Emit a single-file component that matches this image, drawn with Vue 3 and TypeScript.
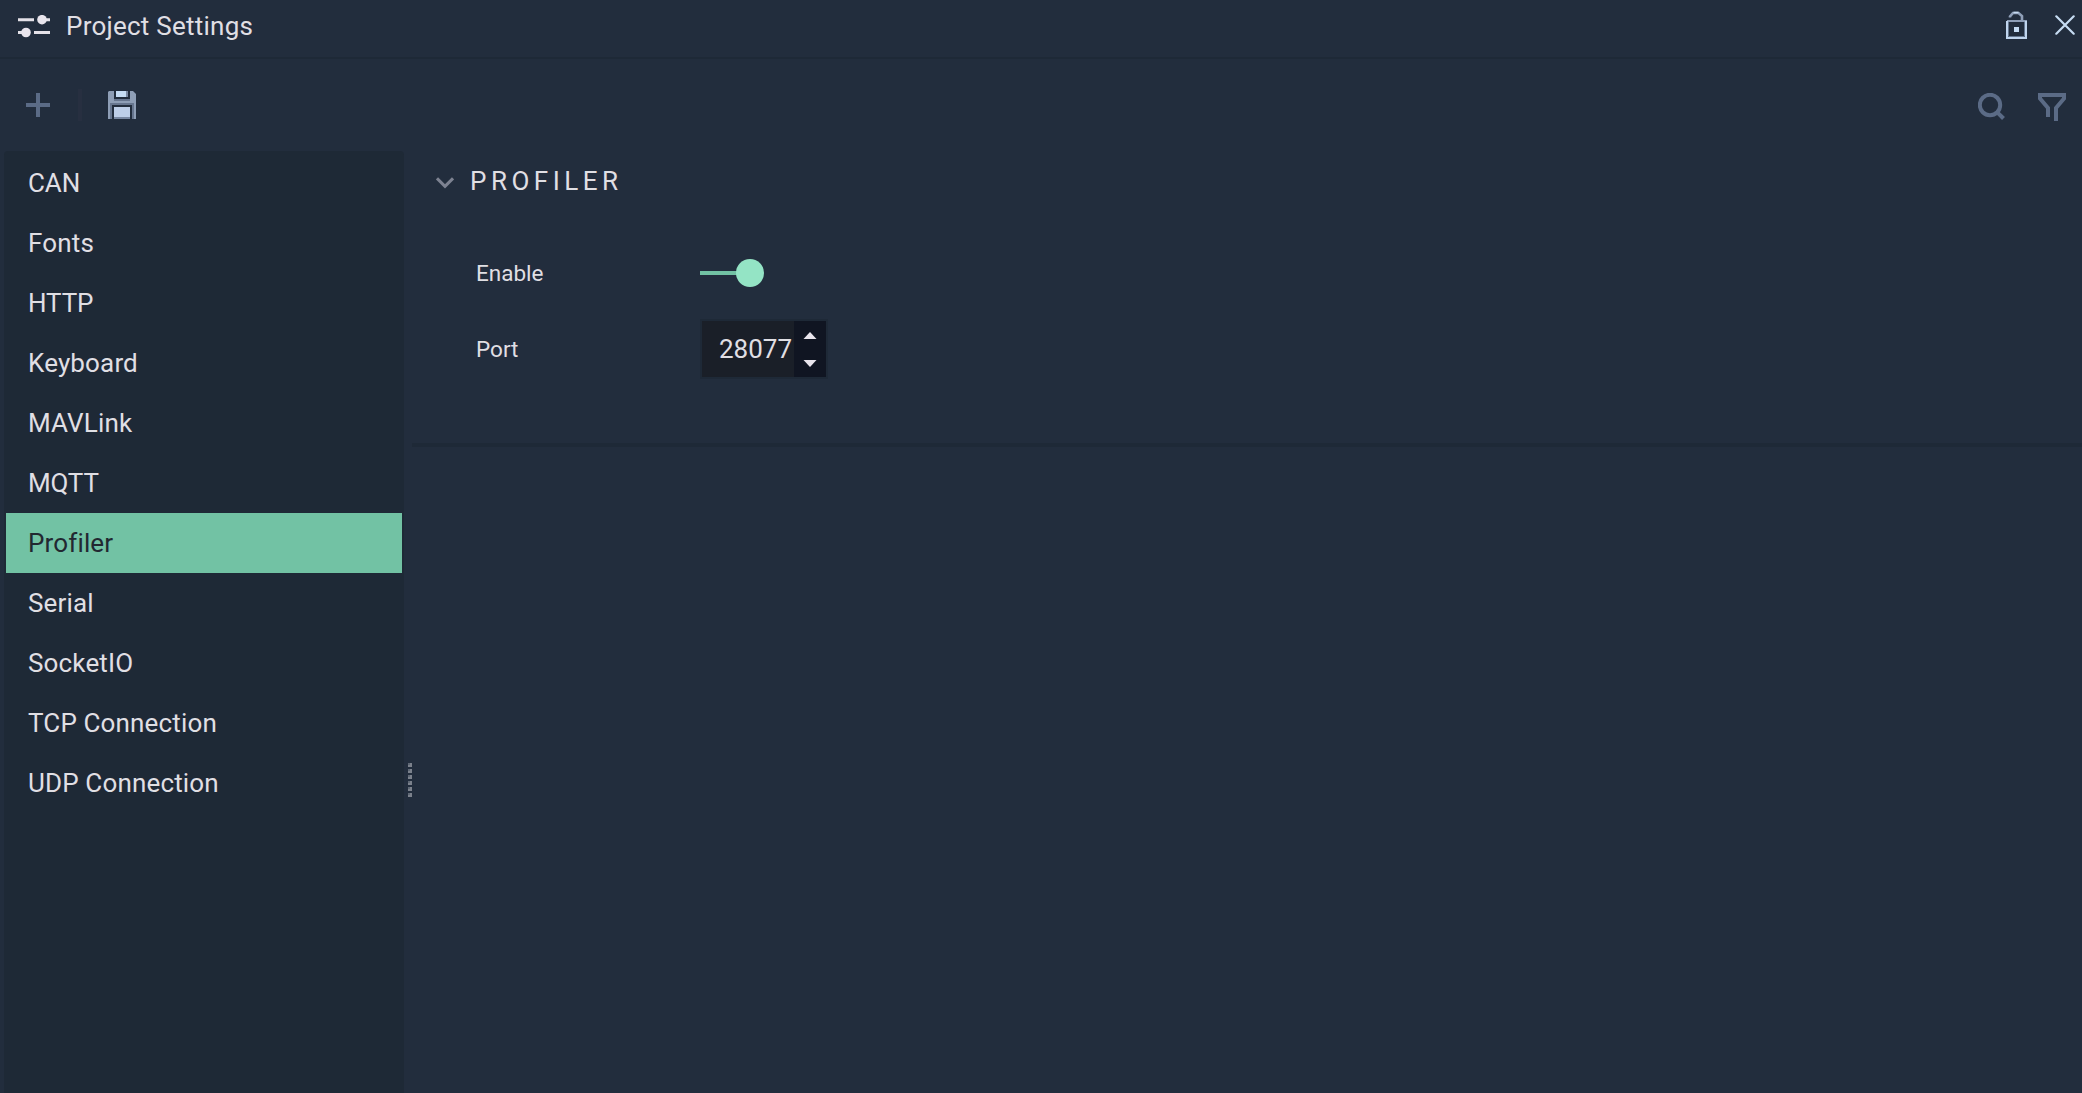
<script setup lang="ts">
import { ref } from 'vue'

const sections = [
  'CAN',
  'Fonts',
  'HTTP',
  'Keyboard',
  'MAVLink',
  'MQTT',
  'Profiler',
  'Serial',
  'SocketIO',
  'TCP Connection',
  'UDP Connection',
]
const selected = ref('Profiler')
const enabled = ref(true)
const port = ref(28077)

const isAcronym = (name: string) => name === name.toUpperCase()
</script>

<template>
  <div class="panel">
    <header class="titlebar">
      <svg class="sliders" width="32" height="24" viewBox="0 0 32 24">
        <path d="M0 4.7H16M24 4.7H32M0 17.5H8M16 17.5H32" stroke="#e4e1e8" stroke-width="3" />
        <circle cx="24" cy="4.7" r="4.8" fill="#e9e5ed" />
        <circle cx="8" cy="17.5" r="4.8" fill="#e9e5ed" />
      </svg>
      <h1>Project Settings</h1>
      <svg class="lock" width="22" height="28" viewBox="0 0 22 28">
        <path d="M4 6.5V5.5L7 2H12.5L16 5V10" fill="none" stroke="#8f9fb8" stroke-width="2.6" />
        <path d="M7.5 1.5H12.5" stroke="#c6daf0" stroke-width="1.6" />
        <path d="M1 10H21" stroke="#8f9fb8" stroke-width="2" />
        <path d="M1 10V27H20V10" fill="none" stroke="#c0d5ee" stroke-width="2" />
        <path d="M2.5 11V25.500H18.500V11" fill="none" stroke="#657790" stroke-width="1" />
        <rect x="8" y="16" width="5" height="5" fill="#c6dcf4" />
      </svg>
      <svg class="close" width="20" height="20" viewBox="0 0 20 20">
        <path d="M1.300 1.300L18.700 18.700M18.700 1.300L1.300 18.700" stroke="#c6dcf2" stroke-width="2.2" stroke-linecap="round" />
      </svg>
    </header>

    <div class="toolbar">
      <svg class="add" width="24" height="24" viewBox="0 0 24 24">
        <path d="M12 0V24M0 12H24" stroke="#5b6b86" stroke-width="4" />
      </svg>
      <span class="separator"></span>
      <svg class="save" width="28" height="28" viewBox="0 0 28 28">
        <path d="M1 0H25L28 3V28H0V1Z" fill="#8e9eb6" />
        <path d="M6 0H22V8H6Z" fill="#222d3d" />
        <path d="M8 0H18V6H8Z" fill="#c6dcf4" />
        <path d="M18 0H20V6H18Z" fill="#7b8aa3" />
        <path d="M6 8H22V10H6Z" fill="#66758e" />
        <path d="M2 12H26V14H2ZM2 12H4V28H2ZM24 12H26V28H24Z" fill="#66758e" />
        <path d="M4 14H24V28H4Z" fill="#222d3d" />
        <path d="M6 16H22V26H6Z" fill="#bdcee8" />
        <path d="M6 26H22V28H6Z" fill="#7787a1" />
      </svg>
      <svg class="search" width="28" height="28" viewBox="0 0 28 28">
        <circle cx="12" cy="12" r="10.200" fill="none" stroke="#5b6b86" stroke-width="4" />
        <path d="M19.300 19.300L25.500 25.500" stroke="#5b6b86" stroke-width="4" />
      </svg>
      <svg class="filter" width="28" height="28" viewBox="0 0 28 28">
        <path d="M10 24V15L2 5.500V2H26V5.500L18 15V28" fill="none" stroke="#5b6b86" stroke-width="4" />
      </svg>
    </div>

    <div class="body">
      <nav class="sidebar">
        <button
          v-for="name in sections"
          :key="name"
          type="button"
          :class="{ active: name === selected, acronym: isAcronym(name) }"
          @click="selected = name"
        >{{ name }}</button>
      </nav>
      <div class="splitter"><i v-for="n in 6" :key="n"></i></div>
      <main class="content">
        <section class="group">
          <div class="group-title">
            <svg width="18" height="12" viewBox="0 0 18 12">
              <path d="M1 1.300L9 9.300L17 1.300" fill="none" stroke="#7d8291" stroke-width="3" />
            </svg>
            <h2>PROFILER</h2>
          </div>
          <div class="row enable">
            <label>Enable</label>
            <span class="toggle" @click="enabled = !enabled"><i></i></span>
          </div>
          <div class="row port">
            <label>Port</label>
            <div class="spin">
              <span class="value">{{ port }}</span>
              <div class="arrows">
                <svg width="14" height="7" viewBox="0 0 14 7" @click="port++"><path d="M0.500 7L7 0L13.500 7Z" fill="#e9e5ed" /></svg>
                <svg width="14" height="7" viewBox="0 0 14 7" @click="port--"><path d="M0.500 0L7 7L13.500 0Z" fill="#e9e5ed" /></svg>
              </div>
            </div>
          </div>
        </section>
      </main>
    </div>
  </div>
</template>

<style>
body {
  background: #222d3d;
}
</style>

<style scoped>
.panel {
  box-sizing: border-box;
  width: 2082px;
  height: 1093px;
  display: flex;
  flex-direction: column;
  overflow: hidden;
  background: #222d3d;
  color: #e0dfe4;
  font-family: Roboto, sans-serif;
  font-size: 26px;
}
svg {
  display: block;
  flex: none;
}
h1, h2 {
  margin: 0;
  font-size: 26px;
  font-weight: 400;
}
.titlebar {
  box-sizing: border-box;
  display: flex;
  align-items: flex-start;
  height: 59px;
  border-bottom: 2px solid #1e2937;
}
.sliders {
  margin: 15px 0 0 18px;
}
.titlebar h1 {
  margin: 0 auto 0 16px;
  line-height: 52px;
  letter-spacing: 0.24px;
}
.lock {
  margin: 11px 27px 0 0;
}
.close {
  margin: 15px 7px 0 0;
}
.toolbar {
  display: flex;
  align-items: center;
  height: 92px;
}
.add {
  margin-left: 26px;
}
.separator {
  width: 4px;
  height: 32px;
  margin-left: 28px;
  background: #272f40;
}
.save {
  margin-left: 26px;
}
.search {
  margin: 4px 32px 0 auto;
}
.filter {
  margin: 4px 16px 0 0;
}
.body {
  display: flex;
  flex: 1;
  min-height: 0;
}
.sidebar {
  box-sizing: border-box;
  width: 400px;
  margin-left: 4px;
  padding: 2px;
  background: #1e2936;
  border-radius: 4px 4px 0 0;
}
.sidebar button {
  display: block;
  width: 100%;
  height: 60px;
  padding: 0 0 0 22px;
  border: 0;
  background: none;
  color: inherit;
  font: inherit;
  line-height: 60px;
  letter-spacing: 0.15px;
  text-align: left;
}
.sidebar button.acronym {
  letter-spacing: -0.1px;
}
.sidebar button.active {
  background: #72c2a4;
  color: #222831;
}
.splitter {
  display: flex;
  flex-direction: column;
  gap: 2px;
  width: 8px;
  padding-top: 612px;
  align-items: flex-end;
}
.splitter i {
  width: 4px;
  height: 4px;
  background: linear-gradient(#5f6875, #5f6875) 0 0 / 2px 2px no-repeat, #7b818c;
}
.content {
  flex: 1;
}
.group {
  box-sizing: border-box;
  height: 296px;
  border-bottom: 4px solid #1e2937;
}
.group-title {
  display: flex;
  align-items: center;
  height: 60px;
  padding-left: 24px;
}
.group-title svg {
  margin-top: 4px;
}
.group-title h2 {
  margin-left: 16px;
  letter-spacing: 4.5px;
}
.row {
  display: flex;
  align-items: center;
  height: 76px;
  padding-left: 64px;
}
.enable {
  padding-top: 24px;
}
.row label {
  width: 224px;
  line-height: 28px;
  font-size: 22.5px;
}
.toggle {
  display: flex;
  align-items: center;
  width: 64px;
  height: 28px;
  background: linear-gradient(#72c2a4, #72c2a4) 0 12px / 44px 4px no-repeat;
}
.toggle i {
  width: 28px;
  height: 28px;
  margin-left: auto;
  border-radius: 50%;
  background: #94e4c5;
}
.spin {
  box-sizing: border-box;
  display: flex;
  width: 128px;
  height: 60px;
  border: 2px solid #1e2937;
  background: #1a1f28;
}
.value {
  width: 92px;
  padding-left: 17px;
  box-sizing: border-box;
  line-height: 57px;
}
.arrows {
  display: flex;
  flex-direction: column;
  align-items: center;
  justify-content: space-between;
  box-sizing: border-box;
  width: 32px;
  padding: 11px 0 10px;
  background: #101522;
}
</style>
